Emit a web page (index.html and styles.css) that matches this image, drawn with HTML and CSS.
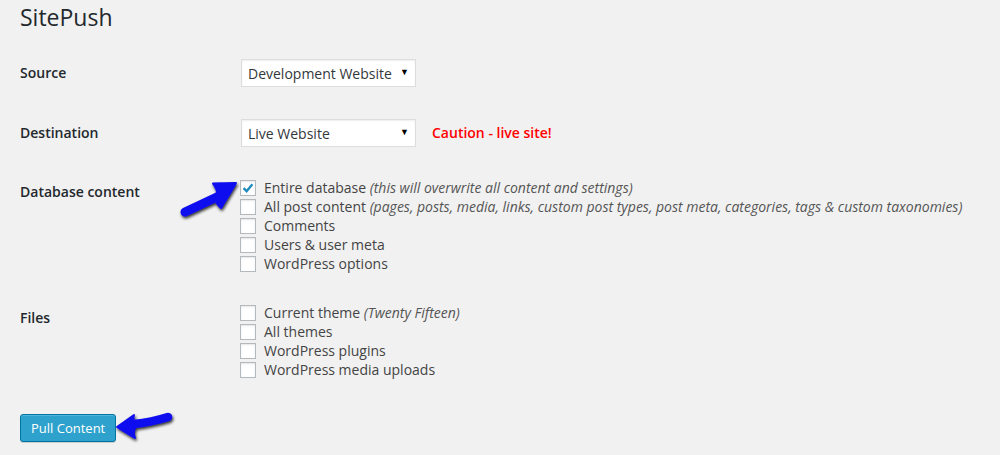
FILE: index.html
```html
<!DOCTYPE html>
<html>
<head>
<meta charset="utf-8">
<title>SitePush</title>
<link rel="stylesheet" href="styles.css">
</head>
<body>
<div class="wrap">
  <h1 class="title">SitePush</h1>
  <div class="row row-source">
    <div class="label">Source</div>
    <div class="field">
      <div class="select"><span class="select-text">Development Website</span><span class="caret">&#9660;</span></div>
    </div>
  </div>
  <div class="row row-dest">
    <div class="label">Destination</div>
    <div class="field">
      <div class="select"><span class="select-text">Live Website</span><span class="caret">&#9660;</span></div>
      <span class="caution">Caution - live site!</span>
    </div>
  </div>
  <div class="row row-db">
    <div class="label label-list">Database content</div>
    <div class="list">
      <div class="check"><span class="box"><svg width="14" height="14" viewBox="0 0 14 14"><path d="M2.6 7.2 L5.6 10.2 L11.4 3.2" fill="none" stroke="#1e8cbe" stroke-width="2.4"/></svg></span><span>Entire database <em>(this will overwrite all content and settings)</em></span></div>
      <div class="check"><span class="box"></span><span>All post content <em>(pages, posts, media, links, custom post types, post meta, categories, tags &amp; custom taxonomies)</em></span></div>
      <div class="check"><span class="box"></span><span>Comments</span></div>
      <div class="check"><span class="box"></span><span>Users &amp; user meta</span></div>
      <div class="check"><span class="box"></span><span>WordPress options</span></div>
    </div>
  </div>
  <div class="row row-files">
    <div class="label label-list label-files">Files</div>
    <div class="list">
      <div class="check"><span class="box"></span><span>Current theme <em>(Twenty Fifteen)</em></span></div>
      <div class="check"><span class="box"></span><span>All themes</span></div>
      <div class="check"><span class="box"></span><span>WordPress plugins</span></div>
      <div class="check"><span class="box"></span><span>WordPress media uploads</span></div>
    </div>
  </div>
  <div class="actions">
    <button class="button">Pull Content</button>
  </div>
</div>

<svg class="arrow arrow-db" width="80" height="56" viewBox="0 0 80 56">
  <defs>
    <filter id="sh1" x="-30%" y="-30%" width="160%" height="160%">
      <feGaussianBlur in="SourceAlpha" stdDeviation="1.6"/>
      <feOffset dx="1" dy="2" result="b"/>
      <feComponentTransfer><feFuncA type="linear" slope="0.8"/></feComponentTransfer>
      <feMerge><feMergeNode/><feMergeNode in="SourceGraphic"/></feMerge>
    </filter>
  </defs>
  <g filter="url(#sh1)">
    <path d="M10 40 Q25 33 44 24" fill="none" stroke="#0a0af0" stroke-width="9" stroke-linecap="round"/>
    <path d="M61 11 L38 11.5 Q44 18 41 26 Q40 31 46 36 Z" fill="#0a0af0" stroke="#0a0af0" stroke-width="2" stroke-linejoin="round"/>
  </g>
</svg>

<svg class="arrow arrow-btn" width="70" height="40" viewBox="0 0 70 40">
  <defs>
    <filter id="sh2" x="-30%" y="-30%" width="160%" height="160%">
      <feGaussianBlur in="SourceAlpha" stdDeviation="1.6"/>
      <feOffset dx="1" dy="2" result="b"/>
      <feComponentTransfer><feFuncA type="linear" slope="0.8"/></feComponentTransfer>
      <feMerge><feMergeNode/><feMergeNode in="SourceGraphic"/></feMerge>
    </filter>
  </defs>
  <g filter="url(#sh2)">
    <path d="M58 12 Q42 17 24 19" fill="none" stroke="#0a0af0" stroke-width="8.5" stroke-linecap="round"/>
    <path d="M7 22 L24 10 Q22 16 27 20 Q22 26 25 33 Z" fill="#0a0af0" stroke="#0a0af0" stroke-width="2" stroke-linejoin="round"/>
  </g>
</svg>
</body>
</html>
```
FILE: styles.css
```css
html, body {
  margin: 0;
  padding: 0;
  background: #f1f1f1;
}
body {
  font-family: "Open Sans", "Liberation Sans", sans-serif;
  font-size: 14px;
  color: #444;
  width: 1000px;
  height: 455px;
  overflow: hidden;
  position: relative;
}
.wrap {
  padding: 0 20px;
}
.title {
  margin: 0;
  padding-top: 3px;
  font-size: 23px;
  font-weight: 400;
  line-height: 29px;
  color: #23282d;
}
.row {
  display: grid;
  grid-template-columns: 221px 1fr;
  align-items: center;
}
.row-source { margin-top: 27px; }
.row-dest { margin-top: 32px; }
.row-db { margin-top: 31px; align-items: start; }
.row-files { margin-top: 30px; align-items: start; }
.label {
  font-weight: 600;
  color: #23282d;
  line-height: 20px;
}
.label-list {
  padding-top: 4px;
}
.label-files {
  padding-top: 5px;
}
.field {
  display: flex;
  align-items: center;
}
.select {
  box-sizing: border-box;
  width: 175px;
  height: 28px;
  background: #fff;
  border: 1px solid #ddd;
  box-shadow: inset 0 1px 2px rgba(0,0,0,0.07);
  display: flex;
  align-items: center;
  justify-content: space-between;
  padding: 1px 6px 0 6px;
  color: #32373c;
  line-height: 26px;
}
.caret {
  font-size: 9px;
  color: #000;
  margin-top: -3px;
}
.caution {
  margin-left: 16px;
  color: #ff0000;
  font-weight: 600;
  margin-top: -2px;
}
.list {
  display: flex;
  flex-direction: column;
}
.check {
  display: flex;
  align-items: center;
  height: 19px;
  line-height: 19px;
  color: #444;
}
.check em {
  font-style: italic;
  color: #555;
}
.box {
  box-sizing: border-box;
  width: 16px;
  height: 16px;
  margin-left: -1px;
  margin-right: 8px;
  background: #fff;
  border: 1px solid #b4b9be;
  box-shadow: inset 0 1px 2px rgba(0,0,0,0.1);
  display: flex;
  align-items: center;
  justify-content: center;
  flex: none;
}
.actions {
  margin-top: 35px;
}
.button {
  box-sizing: border-box;
  height: 28px;
  padding: 0 10px 1px;
  white-space: nowrap;
  background: #2ea2cc;
  border: 1px solid #0074a2;
  border-radius: 3px;
  box-shadow: inset 0 1px 0 rgba(120,200,230,0.5), 0 1px 0 rgba(0,0,0,0.15);
  color: #fff;
  font-family: "Open Sans", "Liberation Sans", sans-serif;
  font-size: 13px;
  line-height: 26px;
}
.arrow {
  position: absolute;
}
.arrow-db {
  left: 175px;
  top: 172px;
}
.arrow-btn {
  left: 110px;
  top: 405px;
}
```
